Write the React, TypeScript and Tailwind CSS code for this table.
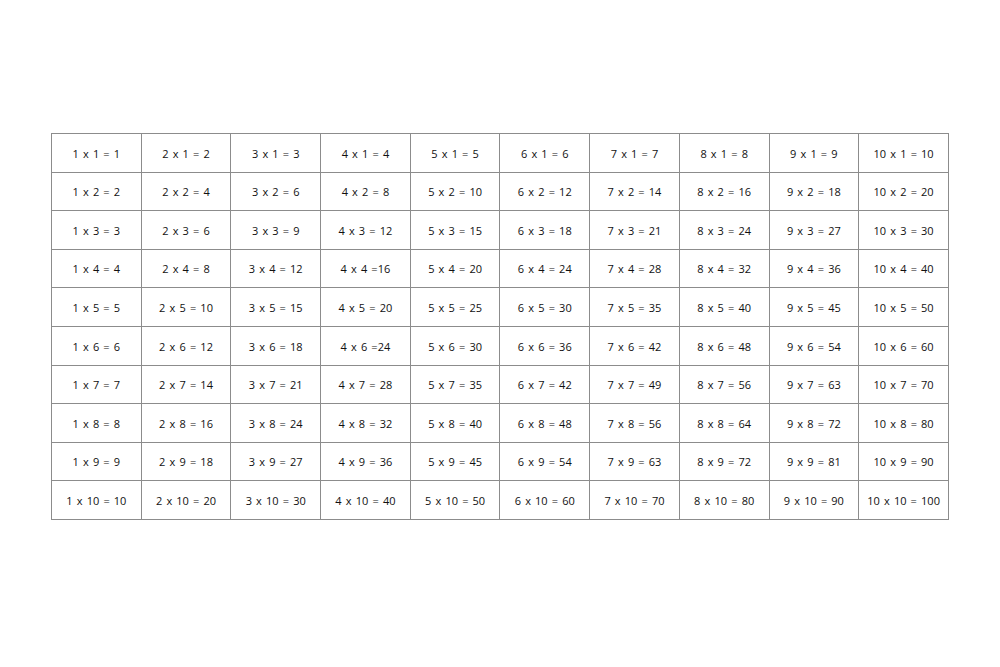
const rows = Array.from({ length: 10 }, (_, r) => r + 1);
const cols = Array.from({ length: 10 }, (_, c) => c + 1);

function label(a: number, b: number) {
  // the source sheet has two typos with a missing space
  if (a === 4 && (b === 4 || b === 6)) return `${a} x ${b} =${a * b}`;
  return `${a} x ${b} = ${a * b}`;
}

export default function App() {
  return (
    <div className="flex h-[667px] w-[1000px] bg-white pl-[51px] pt-[133px]">
      <table className="h-[387px] w-[898px] table-fixed border-collapse border border-[#7d7d7d] font-['Open_Sans',sans-serif] text-[11px] text-[#111] [word-spacing:1.3px]">
        <tbody>
          {rows.map((b) => (
            <tr key={b}>
              {cols.map((a) => (
                <td key={a} className="border border-[#8c8c8c] pt-[2px] text-center align-middle">
                  {label(a, b)}
                </td>
              ))}
            </tr>
          ))}
        </tbody>
      </table>
    </div>
  );
}
